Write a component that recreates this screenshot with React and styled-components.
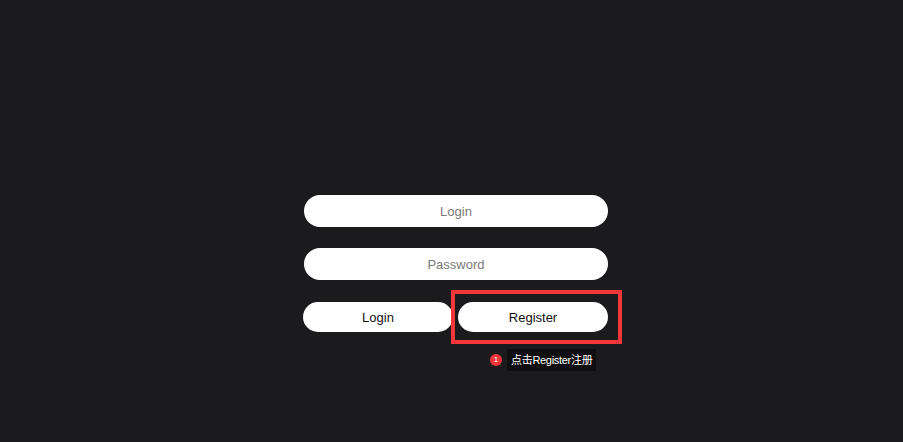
import React from "react";
import styled, { createGlobalStyle } from "styled-components";

const GlobalStyle = createGlobalStyle`
  html, body {
    margin: 0;
    padding: 0;
    background: #1b1b1d;
    font-family: "Liberation Sans", Arial, "Noto Sans CJK SC", sans-serif;
  }
`;

const Page = styled.div`
  width: 903px;
  height: 442px;
  box-sizing: border-box;
  padding: 195px 0 0 304px;
  background: #1b1b1d;
  overflow: hidden;
`;

const Form = styled.form`
  width: 304px;
  display: flex;
  flex-direction: column;
  gap: 21px;
`;

const Input = styled.input`
  box-sizing: border-box;
  width: 100%;
  height: 32px;
  border: none;
  border-radius: 16px;
  background: #ffffff;
  text-align: center;
  font-family: inherit;
  font-size: 13px;
  color: #222;
  outline: none;

  &::placeholder {
    color: #7a7a7a;
  }
`;

const ButtonRow = styled.div`
  position: relative;
  display: flex;
  gap: 5px;
  margin-left: -1px;
  margin-top: 1px;
`;

const Button = styled.button`
  flex: 1;
  height: 30px;
  border: none;
  border-radius: 15px;
  background: #ffffff;
  color: #111;
  font-family: inherit;
  font-size: 13px;
  cursor: pointer;
`;

const Highlight = styled.div`
  position: absolute;
  left: 148px;
  top: -12px;
  width: 171px;
  height: 54px;
  box-sizing: border-box;
  border: 4px solid #f3363a;
  pointer-events: none;
`;

const Hint = styled.div`
  position: absolute;
  left: 187px;
  top: 47px;
  display: flex;
  align-items: center;
  gap: 5px;
  white-space: nowrap;
`;

const Badge = styled.span`
  width: 12px;
  height: 12px;
  border-radius: 50%;
  background: #f3363a;
  color: #fff;
  font-size: 8px;
  line-height: 12px;
  text-align: center;
`;

const HintText = styled.span`
  background: #0f0f10;
  color: #ffffff;
  font-size: 11px;
  letter-spacing: -0.3px;
  line-height: 22px;
  padding: 0 4px 0 4px;
  border-radius: 2px;
`;

export default function App() {
  return (
    <Page>
      <GlobalStyle />
      <Form onSubmit={(e) => e.preventDefault()}>
        <Input placeholder="Login" />
        <Input type="password" placeholder="Password" />
        <ButtonRow>
          <Button type="button">Login</Button>
          <Button type="button">Register</Button>
          <Highlight />
          <Hint>
            <Badge>1</Badge>
            <HintText>点击Register注册</HintText>
          </Hint>
        </ButtonRow>
      </Form>
    </Page>
  );
}
